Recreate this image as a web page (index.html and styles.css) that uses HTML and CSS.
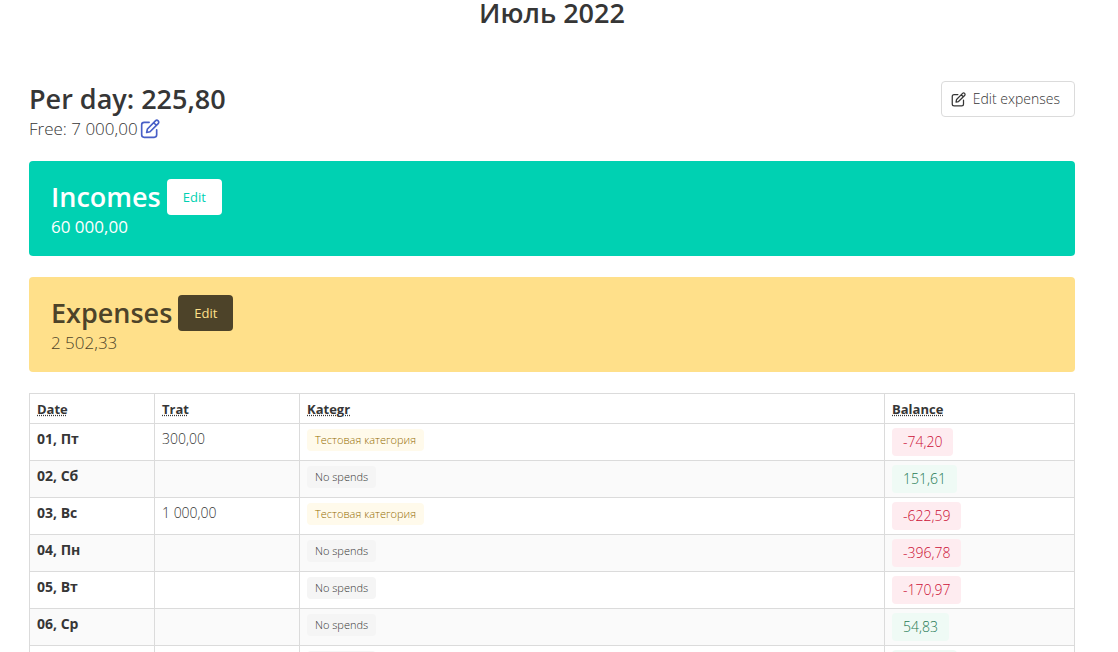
FILE: index.html
```html
<!DOCTYPE html>
<html lang="ru">
<head>
<meta charset="utf-8">
<meta name="viewport" content="width=device-width, initial-scale=1">
<title>Июль 2022</title>
<link rel="stylesheet" href="styles.css">
</head>
<body>
<svg class="sprite" aria-hidden="true">
  <symbol id="icon-edit" viewBox="0 0 24 24">
    <path d="M11 4H5a3 3 0 0 0-3 3v12a3 3 0 0 0 3 3h12a3 3 0 0 0 3-3v-6"/>
    <path d="M18.5 2.2a2.3 2.3 0 0 1 3.3 3.3L12 15.3 8 16.2l.9-4.2zM16.5 4.500l3 3"/>
  </symbol>
</svg>
<main class="page">
  <h1 class="month">Июль 2022</h1>
  <header class="summary">
    <div>
      <h2 class="title">Per day: 225,80</h2>
      <p class="subtitle">Free: 7 000,00<a class="edit-link" href="#" aria-label="Edit free amount"><svg class="icon icon-link"><use href="#icon-edit"/></svg></a></p>
    </div>
    <button class="button button-outline" type="button"><svg class="icon icon-small"><use href="#icon-edit"/></svg>Edit expenses</button>
  </header>
  <section class="card card-income">
    <div class="card-head"><h2 class="title">Incomes</h2><button class="button" type="button">Edit</button></div>
    <p class="subtitle">60 000,00</p>
  </section>
  <section class="card card-expense">
    <div class="card-head"><h2 class="title">Expenses</h2><button class="button" type="button">Edit</button></div>
    <p class="subtitle">2 502,33</p>
  </section>
  <table class="table">
    <thead>
      <tr><th class="col-date"><abbr title="Date">Date</abbr></th><th class="col-spent"><abbr title="Trat">Trat</abbr></th><th><abbr title="Kategr">Kategr</abbr></th><th class="col-balance"><abbr title="Balance">Balance</abbr></th></tr>
    </thead>
    <tbody>
      <tr><th>01, Пт</th><td>300,00</td><td><span class="tag tag-category">Тестовая категория</span></td><td><span class="tag tag-medium tag-minus">-74,20</span></td></tr>
      <tr><th>02, Сб</th><td></td><td><span class="tag">No spends</span></td><td><span class="tag tag-medium tag-plus">151,61</span></td></tr>
      <tr><th>03, Вс</th><td>1 000,00</td><td><span class="tag tag-category">Тестовая категория</span></td><td><span class="tag tag-medium tag-minus">-622,59</span></td></tr>
      <tr><th>04, Пн</th><td></td><td><span class="tag">No spends</span></td><td><span class="tag tag-medium tag-minus">-396,78</span></td></tr>
      <tr><th>05, Вт</th><td></td><td><span class="tag">No spends</span></td><td><span class="tag tag-medium tag-minus">-170,97</span></td></tr>
      <tr><th>06, Ср</th><td></td><td><span class="tag">No spends</span></td><td><span class="tag tag-medium tag-plus">54,83</span></td></tr>
      <tr><th></th><td></td><td><span class="tag">No spends</span></td><td><span class="tag tag-medium tag-plus">280,64</span></td></tr>
    </tbody>
  </table>
</main>
</body>
</html>
```
FILE: styles.css
```css
* { box-sizing: border-box; }
html { height: 100%; overflow: hidden; }
body {
  height: 100%;
  margin: 0;
  overflow: hidden;
  background: #fff;
  color: #363636;
  font: 14px/20px "Open Sans", "Noto Sans", sans-serif;
}
h1, h2, p { margin: 0; }
.sprite { position: absolute; width: 0; height: 0; }
.page { padding: 0 43px 0 29px; }
.month {
  margin-bottom: 55px;
  font-size: 27px;
  line-height: 26px;
  font-weight: 600;
  text-align: center;
}
.summary {
  display: flex;
  justify-content: space-between;
  align-items: flex-start;
  margin-bottom: 21px;
}
.title {
  font-size: 27px;
  line-height: 36px;
  font-weight: 600;
}
.subtitle {
  display: flex;
  align-items: center;
  font-size: 17px;
  line-height: 23px;
  font-weight: 300;
}
.icon {
  display: block;
  fill: none;
  stroke: currentColor;
  stroke-width: 2;
  stroke-linecap: round;
  stroke-linejoin: round;
}
.icon-link { width: 20px; height: 20px; }
.icon-small { width: 15px; height: 15px; }
.edit-link { margin-left: 2px; color: #485fc7; }
.button {
  display: flex;
  align-items: center;
  gap: 7px;
  height: 36px;
  padding: 0 14px;
  border: 1px solid transparent;
  border-radius: 4px;
  font: 13px/20px "Open Sans", "Noto Sans", sans-serif;
  cursor: pointer;
}
.button-outline {
  padding: 0 14px 0 9px;
  border-color: #dbdbdb;
  background: #fff;
  color: #363636;
  font-size: 14px;
  font-weight: 300;
}
.card {
  margin-bottom: 21px;
  padding: 18px 22px;
  border-radius: 4px;
}
.card-head { display: flex; align-items: center; gap: 6px; }
.card .button { padding: 0 15px; }
.card-income { background: #00d1b2; color: #fff; }
.card-income .subtitle { font-weight: 400; }
.card-income .button { background: #fff; color: #00d1b2; }
.card-expense { background: #ffe08a; color: #4d4329; }
.card-expense .button { background: #4d4329; color: #ffe08a; }
.table {
  width: 100%;
  border-collapse: collapse;
  table-layout: fixed;
}
.table th, .table td {
  padding: 4px 7px;
  border: 1px solid #dbdbdb;
  line-height: 22px;
  text-align: left;
  vertical-align: top;
}
.table td { font-weight: 300; }
.table th { font-weight: 700; }
.table thead th { padding-bottom: 3px; font-size: 13px; }
.table tbody tr:nth-child(even) { background: #fafafa; }
.table abbr { text-decoration: underline dotted; }
.col-date { width: 125px; }
.col-spent { width: 145px; }
.col-balance { width: 190px; }
.tag {
  display: inline-flex;
  align-items: center;
  height: 22px;
  margin-top: 1px;
  padding: 0 8px;
  border-radius: 4px;
  background: #f5f5f5;
  color: #363636;
  font-size: 11px;
  font-weight: 300;
  vertical-align: top;
}
.tag-category { background: #fffaeb; color: #946c00; }
.tag-medium {
  height: 28px;
  margin-top: 0;
  padding: 0 11px;
  font-size: 14px;
}
.tag-minus { background: #feecf0; color: #cc0f35; }
.tag-plus { background: #effaf5; color: #257953; }
```
